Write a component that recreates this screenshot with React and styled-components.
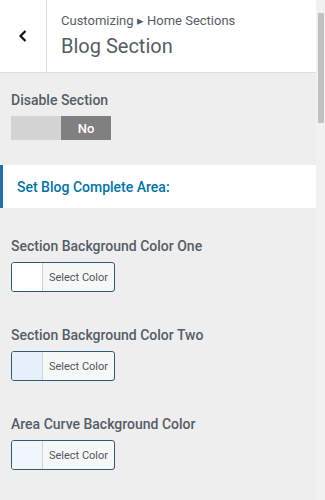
import styled, { createGlobalStyle } from "styled-components";

const GlobalStyle = createGlobalStyle`
  html, body {
    margin: 0;
    padding: 0;
    background: #eeeeee;
    font-family: Roboto, "Liberation Sans", sans-serif;
    overflow: hidden;
  }
`;

const Frame = styled.div`
  display: flex;
  width: 325px;
  height: 500px;
  background: #eeeeee;
`;

const Panel = styled.div`
  flex: 1;
  display: flex;
  flex-direction: column;
  overflow: hidden;
`;

const Header = styled.div`
  display: flex;
  flex-shrink: 0;
  height: 72px;
  background: #fff;
  border-bottom: 1px solid #dddddd;
`;

const BackButton = styled.div`
  width: 46px;
  display: flex;
  align-items: center;
  justify-content: center;
  border-right: 1px solid #dddddd;
  color: #111;
`;

const Titles = styled.div`
  display: flex;
  flex-direction: column;
  padding: 12px 0 0 14px;
  color: #555d66;
`;

const Crumb = styled.span`
  font-size: 13px;
  line-height: 18px;
`;

const Title = styled.span`
  font-size: 20px;
  line-height: 30px;
  margin-top: 1px;
`;

const Body = styled.div`
  display: flex;
  flex-direction: column;
  padding-top: 18px;
`;

const Control = styled.div`
  display: flex;
  flex-direction: column;
  padding: 0 11px;
  margin-bottom: ${(p) => p.$gap || 0}px;
`;

const Label = styled.span`
  font-size: 14px;
  font-weight: 500;
  line-height: 18px;
  color: #555d66;
  margin-bottom: 7px;
`;

const Toggle = styled.div`
  display: flex;
  width: 100px;
  height: 24px;
`;

const ToggleHalf = styled.div`
  flex: 1;
  display: flex;
  align-items: center;
  justify-content: center;
  background: ${(p) => (p.$on ? "#808080" : "#d3d3d3")};
  color: #fff;
  font-size: 13px;
  font-weight: 500;
`;

const Heading = styled.div`
  margin: 25px 0 29px;
  height: 43px;
  display: flex;
  align-items: center;
  padding-left: 14px;
  background: #fff;
  border-left: 3px solid #2271b1;
  color: #0073aa;
  font-size: 14px;
  font-weight: 500;
`;

const ColorButton = styled.div`
  display: flex;
  width: 104px;
  height: 30px;
  box-sizing: border-box;
  border: 1px solid #2c5b75;
  border-radius: 3px;
  overflow: hidden;
  background: #f6f7f7;
`;

const Swatch = styled.div`
  width: 30px;
  background: ${(p) => p.$color};
  border-right: 1px solid #d0d4d7;
`;

const ButtonText = styled.span`
  flex: 1;
  display: flex;
  align-items: center;
  justify-content: center;
  font-size: 11px;
  color: #50575e;
`;

const ScrollTrack = styled.div`
  width: 9px;
  background: #f1f1f1;
  position: relative;
`;

const Thumb = styled.div`
  position: absolute;
  top: 13px;
  left: 2px;
  width: 6px;
  height: 110px;
  background: #c1c1c1;
`;

const colors = [
  { label: "Section Background Color One", color: "#ffffff" },
  { label: "Section Background Color Two", color: "#e6f0fa" },
  { label: "Area Curve Background Color", color: "#f0f6fb" },
];

const App = () => {
  return (
    <>
      <GlobalStyle />
      <Frame>
        <Panel>
          <Header>
            <BackButton>
              <svg width="12" height="14" viewBox="0 0 12 14">
                <path d="M8.5 2 L3.5 7 L8.5 12" fill="none" stroke="#111" strokeWidth="2.2" />
              </svg>
            </BackButton>
            <Titles>
              <Crumb>Customizing ▸ Home Sections</Crumb>
              <Title>Blog Section</Title>
            </Titles>
          </Header>
          <Body>
            <Control>
              <Label>Disable Section</Label>
              <Toggle>
                <ToggleHalf />
                <ToggleHalf $on>No</ToggleHalf>
              </Toggle>
            </Control>
            <Heading>Set Blog Complete Area:</Heading>
            {colors.map((c) => (
              <Control key={c.label} $gap={34}>
                <Label>{c.label}</Label>
                <ColorButton>
                  <Swatch $color={c.color} />
                  <ButtonText>Select Color</ButtonText>
                </ColorButton>
              </Control>
            ))}
          </Body>
        </Panel>
        <ScrollTrack>
          <Thumb />
        </ScrollTrack>
      </Frame>
    </>
  );
};

export default App;
